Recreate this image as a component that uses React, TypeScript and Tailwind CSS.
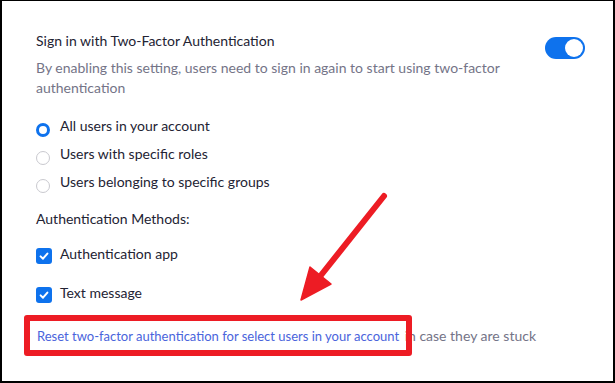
import React from "react";

const font = { fontFamily: "Lato, 'Open Sans', sans-serif" };

function Radio({ checked, label }: { checked?: boolean; label: string }) {
  return (
    <div className="flex items-start h-[28px]">
      {checked ? (
        <span className="mt-[11px] box-border w-[14px] h-[14px] rounded-full border-[3.5px] border-[#0E72ED] bg-white shrink-0" />
      ) : (
        <span className="mt-[11px] box-border w-[14px] h-[14px] rounded-full border border-[#c9c9cf] bg-white shrink-0" />
      )}
      <span className="ml-[10px] leading-[28px] text-[14px] text-[#232333]">{label}</span>
    </div>
  );
}

function Check({ label }: { label: string }) {
  return (
    <div className="flex items-start h-[20px]">
      <span className="mt-[4px] w-[16px] h-[16px] rounded-[3px] bg-[#0E72ED] flex items-center justify-center shrink-0">
        <svg width="16" height="16" viewBox="0 0 16 16">
          <path d="M4.6 8.4 L7 10.7 L11.4 5.6" fill="none" stroke="#fff" strokeWidth="2" strokeLinecap="round" strokeLinejoin="round" />
        </svg>
      </span>
      <span className="ml-[8px] leading-[20px] text-[14px] text-[#232333]">{label}</span>
    </div>
  );
}

export default function App() {
  return (
    <div
      style={font}
      className="relative w-[615px] h-[383px] bg-white border-black border-t border-l-2 border-r-2 border-b-2 box-border overflow-hidden"
    >
      <div className="pl-[34px] pr-[28px] pt-[30px] flex flex-col">
        <div className="flex justify-between items-start h-[20px]">
          <div className="text-[14px] leading-[20px] text-[#232333]">Sign in with Two-Factor Authentication</div>
          <div className="mt-[6px] w-[40px] h-[22px] rounded-full bg-[#0E72ED] flex items-center justify-end pr-[2px] shrink-0">
            <span className="w-[18px] h-[18px] rounded-full bg-white" />
          </div>
        </div>
        <div className="mt-[7px] w-[480px] text-[14px] leading-[20px] text-[#747487]">
          By enabling this setting, users need to sign in again to start using two-factor authentication
        </div>
        <div className="mt-[14px] flex flex-col">
          <Radio checked label="All users in your account" />
          <Radio label="Users with specific roles" />
          <Radio label="Users belonging to specific groups" />
        </div>
        <div className="mt-[13px] text-[14px] leading-[20px] text-[#232333]">Authentication Methods:</div>
        <div className="mt-[15px] flex flex-col gap-[19px]">
          <Check label="Authentication app" />
          <Check label="Text message" />
        </div>
        <div className="mt-[22px] pl-[1px] leading-[20px] whitespace-nowrap">
          <span className="text-[13px] text-[#4a64dc]">Reset two-factor authentication for select users in your account</span>
          <span className="ml-[2px] text-[14px] text-[#747487]"> in case they are stuck</span>
        </div>
      </div>

      <div className="absolute left-[22px] top-[314px] w-[388px] h-[41px] border-[6px] border-[#ED1C24] rounded-[3px]" />

      <svg className="absolute left-0 top-0 pointer-events-none" width="615" height="383" viewBox="0 0 615 383">
        <line x1="382" y1="195" x2="316" y2="278" stroke="#ED1C24" strokeWidth="6" strokeLinecap="round" />
        <polygon points="299,299 308,266 329,283" fill="#ED1C24" stroke="#ED1C24" strokeWidth="1.5" strokeLinejoin="round" />
      </svg>
    </div>
  );
}
